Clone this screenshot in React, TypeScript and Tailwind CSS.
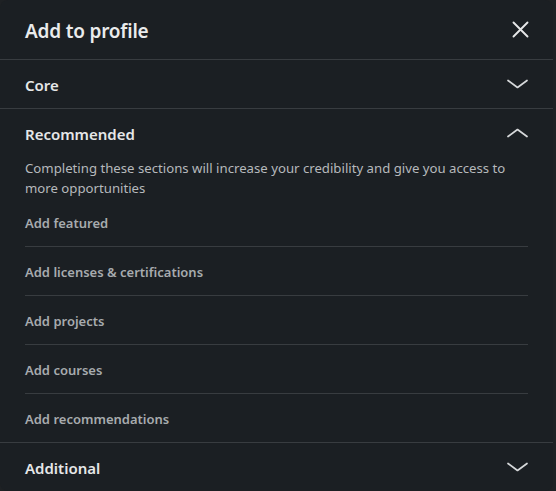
const items = [
  "Add featured",
  "Add licenses & certifications",
  "Add projects",
  "Add courses",
  "Add recommendations",
];

function Chevron({ up = false }: { up?: boolean }) {
  return (
    <svg width="21" height="10" viewBox="0 0 21 10" fill="none" className={up ? "rotate-180" : ""}>
      <path d="M1 1.5 L10.5 8.5 L20 1.5" stroke="#d6d8da" strokeWidth="1.7" strokeLinecap="round" strokeLinejoin="round" />
    </svg>
  );
}

function CloseIcon() {
  return (
    <svg width="17" height="17" viewBox="0 0 17 17" fill="none">
      <path d="M1.5 1.5 L15.5 15.5 M15.5 1.5 L1.5 15.5" stroke="#e6e7e8" strokeWidth="1.9" strokeLinecap="round" />
    </svg>
  );
}

export default function App() {
  return (
    <div className="w-[556px] h-[491px] bg-[#1e2124] overflow-hidden font-['Noto_Sans',sans-serif]">
      <div className="w-[553px] h-[491px] bg-[#1b1f23] rounded-lg flex flex-col">
        <div className="h-[60px] px-[25px] flex items-center justify-between border-b border-[#383c40] shrink-0">
          <h1 className="text-[19px] font-semibold text-[#eaebec] tracking-[-0.2px] pt-[4px]">Add to profile</h1>
          <button className="mr-[-1px]">
            <CloseIcon />
          </button>
        </div>

        <div className="h-[49px] px-[25px] flex items-center justify-between border-b border-[#383c40] shrink-0">
          <span className="text-[15px] font-semibold text-[#e6e7e8] pt-[2px]">Core</span>
          <Chevron />
        </div>

        <div className="px-[25px] pt-[13px] border-b border-[#383c40] shrink-0">
          <div className="flex items-center justify-between h-[22px]">
            <span className="text-[15px] font-semibold text-[#e6e7e8] pt-[2px]">Recommended</span>
            <Chevron up />
          </div>
          <p className="mt-[14px] text-[13.2px] leading-5 text-[#b6b9bc] pr-[20px]">
            Completing these sections will increase your credibility and give you access to more opportunities
          </p>
          <ul className="mt-[15px]">
            {items.map((item, i) => (
              <li
                key={item}
                className={
                  i === 0
                    ? "pb-[13px] text-[13px] leading-5 font-semibold text-[#a7abae]"
                    : "pt-[15px] pb-[13px] border-t border-[#383c40] text-[13px] leading-5 font-semibold text-[#a7abae]"
                }
              >
                {item}
              </li>
            ))}
          </ul>
        </div>

        <div className="h-[48px] px-[25px] flex items-center justify-between shrink-0">
          <span className="text-[15px] font-semibold text-[#e6e7e8] pt-[2px]">Additional</span>
          <Chevron />
        </div>
      </div>
    </div>
  );
}
